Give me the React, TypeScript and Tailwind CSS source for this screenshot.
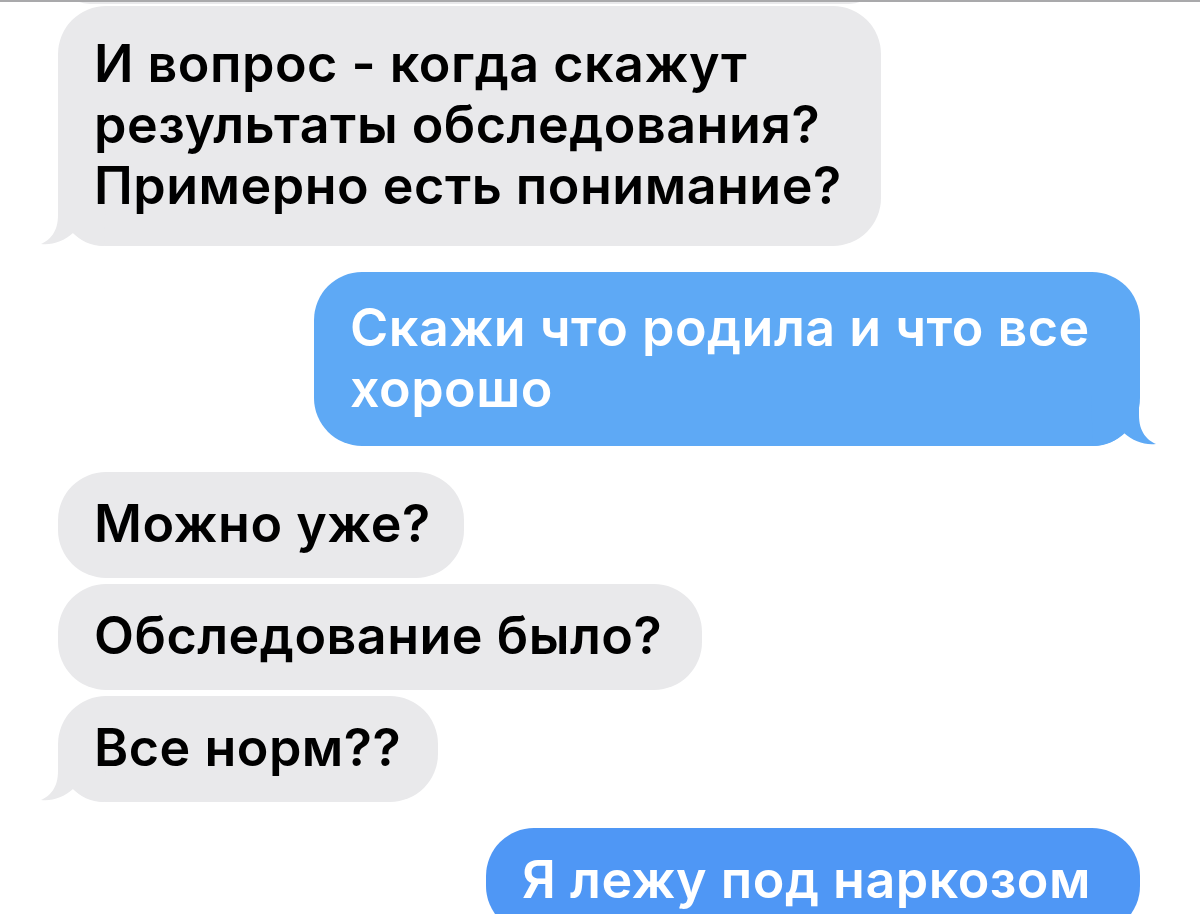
import React from 'react'

type Side = 'in' | 'out'

interface Message {
  id: number
  side: Side
  lines: string[]
  width: string
  height: string
  tail?: boolean
  tone?: string
  gap: string
}

const messages: Message[] = [
  {
    id: 1,
    side: 'in',
    lines: ['И вопрос - когда скажут', 'результаты обследования?', 'Примерно есть понимание?'],
    width: 'w-[823px]',
    height: 'h-[240px]',
    tail: true,
    gap: 'mt-[2px]',
  },
  {
    id: 2,
    side: 'out',
    lines: ['Скажи что родила и что все', 'хорошо'],
    width: 'w-[826px]',
    height: 'h-[174px]',
    tail: true,
    tone: 'bg-[#5ea9f5]',
    gap: 'mt-[26px]',
  },
  { id: 3, side: 'in', lines: ['Можно уже?'], width: 'w-[406px]', height: 'h-[106px]', gap: 'mt-[26px]' },
  { id: 4, side: 'in', lines: ['Обследование было?'], width: 'w-[644px]', height: 'h-[106px]', gap: 'mt-[6px]' },
  { id: 5, side: 'in', lines: ['Все норм??'], width: 'w-[380px]', height: 'h-[106px]', tail: true, gap: 'mt-[6px]' },
  {
    id: 6,
    side: 'out',
    lines: ['Я лежу под наркозом'],
    width: 'w-[654px]',
    height: 'h-[106px]',
    tone: 'bg-[#4f97f5]',
    gap: 'mt-[26px]',
  },
]

// хвостик пузыря, рисуется в углу снизу
function Tail({ side, color }: { side: Side; color: string }) {
  return (
    <svg
      width="66"
      height="50"
      viewBox="0 0 66 50"
      className={
        side === 'in'
          ? 'absolute left-[-18px] bottom-0'
          : 'absolute right-[-17px] bottom-0 -scale-x-100'
      }
    >
      <path
        d="M18 0 L18 19 C18 36 10 44 1 48 C12 49.5 24 45 33 37 C40 44 50 50 64 50 L66 0 Z"
        fill={color}
      />
    </svg>
  )
}

function Bubble({ msg }: { msg: Message }) {
  const isIn = msg.side === 'in'
  return (
    <div
      className={`relative ${msg.width} ${msg.height} ${msg.gap} ${
        isIn ? 'ml-[58px] self-start bg-[#e9e9eb] text-black' : 'mr-[60px] self-end text-white'
      } ${msg.tone || ''} rounded-[48px] flex items-center px-[36px] shrink-0`}
    >
      {msg.tail && <Tail side={msg.side} color={isIn ? '#e9e9eb' : '#5ea9f5'} />}
      <div className="relative -mt-[3px] text-[52px] leading-[61px] font-semibold tracking-[0.5px] whitespace-nowrap">
        {msg.lines.map((line) => (
          <div key={line}>{line}</div>
        ))}
      </div>
    </div>
  )
}

export default function App() {
  return (
    <div
      className="relative w-[1200px] h-[914px] overflow-hidden bg-white flex flex-col"
      style={{ fontFamily: 'Inter, "Noto Sans", sans-serif' }}
    >
      {/* верхняя линия и край предыдущего сообщения */}
      <div className="absolute top-0 left-0 right-0 h-[2px] bg-[#a9a9ab] z-10" />
      <div className="ml-[58px] w-[823px] h-[64px] -mt-[60px] rounded-[48px] bg-[#e9e9eb] shrink-0" />

      {messages.map((m) => (
        <Bubble key={m.id} msg={m} />
      ))}
    </div>
  )
}
